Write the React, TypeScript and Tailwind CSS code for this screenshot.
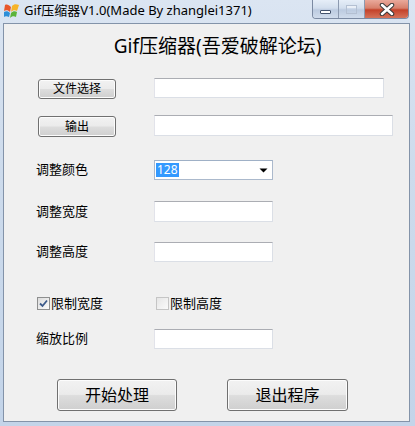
import React from "react";

function WinButton({ children, className }: { children: React.ReactNode; className: string }) {
  return (
    <div
      className={
        "flex items-center justify-center rounded-[3px] border border-[#707070] bg-[linear-gradient(to_bottom,#f2f2f2_0%,#ebebeb_48%,#dddddd_52%,#cfcfcf_100%)] shadow-[inset_0_0_0_1px_#fcfcfc] text-black " +
        className
      }
    >
      {children}
    </div>
  );
}

function TextBox({ className }: { className: string }) {
  return (
    <div
      className={
        "bg-white border border-[#dbdfe6] border-t-[#abadb3] border-l-[#e2e3ea] " + className
      }
    />
  );
}

function AppIcon() {
  return (
    <svg width="17" height="17" viewBox="0 0 17 17">
      <path d="M2 3 C4 2 6 3 8 5 L7 10 C5 8 3 8 1 9 Z" fill="#e8572a" />
      <path d="M9 4 C11 2 13 2 16 3 L14 9 C12 8 10 8 8 10 Z" fill="#f6b42a" />
      <path d="M1 10 C3 9 5 9 7 11 L6 15 C4 14 2 14 1 15 Z" fill="#2d8fd8" />
      <path d="M8 11 C10 9 12 9 14 10 L13 15 C11 14 9 14 7 16 Z" fill="#5bb43a" />
    </svg>
  );
}

function CheckBox({ checked }: { checked: boolean }) {
  return (
    <div
      className={
        "w-[13px] h-[13px] border flex items-center justify-center " +
        (checked
          ? "border-[#8e8f8f] bg-[linear-gradient(135deg,#dcdcdc,#fbfbfb)]"
          : "border-[#c5c5c5] bg-[linear-gradient(135deg,#e6e6e6,#fafafa)]")
      }
    >
      {checked && (
        <svg width="9" height="9" viewBox="0 0 9 9">
          <path d="M1 4.5 L3.5 7 L8 1.5" stroke="#3c5a8a" strokeWidth="1.8" fill="none" />
        </svg>
      )}
    </div>
  );
}

export default function App() {
  return (
    <div className="w-[415px] h-[426px] flex flex-col overflow-hidden bg-[linear-gradient(to_bottom,#dbe5f2_0%,#cddbec_40%,#c3d4e9_100%)] font-['Noto_Sans','Noto_Sans_CJK_SC',sans-serif] text-black">
      {/* title bar */}
      <div className="h-[23px] flex items-start relative shrink-0">
        <div className="ml-[3px] mt-[2px]">
          <AppIcon />
        </div>
        <div className="ml-[4px] mt-[2px] text-[13px] leading-[17px] text-black">
          Gif压缩器V1.0(Made By zhanglei1371)
        </div>
        <div className="absolute right-[6px] top-0 flex h-[19px] rounded-b-[4px] border border-t-0 border-[#7b8aa2] overflow-hidden">
          <div className="w-[26px] h-full flex items-center justify-center bg-[linear-gradient(to_bottom,#e6eef8_0%,#d2deed_45%,#bccbe0_55%,#d0dcec_100%)] border-r border-[#8c9ab0]">
            <div className="w-[11px] h-[4px] mt-[5px] bg-white border border-[#43536d] rounded-[1px]" />
          </div>
          <div className="w-[26px] h-full flex items-center justify-center bg-[linear-gradient(to_bottom,#e6eef8_0%,#d2deed_45%,#bccbe0_55%,#d0dcec_100%)] border-r border-[#8c9ab0]">
            <div className="w-[11px] h-[9px] border border-[#b4c0d2] shadow-[inset_0_2px_0_#ffffff80]" />
          </div>
          <div className="w-[43px] h-full flex items-center justify-center bg-[linear-gradient(to_bottom,#e9a99b_0%,#d7806c_45%,#c4422a_55%,#d5735a_100%)]">
            <svg width="16" height="13" viewBox="0 0 16 13">
              <path d="M3 2 L13 11 M13 2 L3 11" stroke="#3a3a3a" strokeWidth="4.5" strokeLinecap="round" />
              <path d="M3 2 L13 11 M13 2 L3 11" stroke="#ffffff" strokeWidth="2.5" strokeLinecap="round" />
            </svg>
          </div>
        </div>
      </div>

      {/* client area */}
      <div className="flex-1 ml-[3px] mr-[5px] mb-[4px] border border-[#8393a9] bg-[#f0f0f0] flex flex-col">
        <div className="mt-[10px] h-[24px] flex items-center justify-center text-[19px] leading-[24px] pl-[22px]">
          Gif压缩器(吾爱破解论坛)
        </div>

        <div className="mt-[20px] h-[21px] flex items-start pl-[34px]">
          <WinButton className="mt-[1px] w-[78px] h-[20px] text-[12px]">文件选择</WinButton>
          <TextBox className="ml-[38px] w-[230px] h-[20px]" />
        </div>

        <div className="mt-[16px] h-[22px] flex items-start pl-[34px]">
          <WinButton className="mt-[1px] w-[78px] h-[21px] text-[12px]">输出</WinButton>
          <TextBox className="ml-[38px] w-[239px] h-[21px]" />
        </div>

        <div className="mt-[23px] h-[20px] flex items-center pl-[32px]">
          <div className="w-[118px] text-[13px]">调整颜色</div>
          <div className="w-[119px] h-[20px] bg-white border border-[#abb9cc] border-t-[#9fb0c6] flex items-center pl-[1px] pr-[4px]">
            <span className="bg-[#3399ff] text-white text-[12px] leading-[14px] px-[1px]">128</span>
            <div className="flex-1" />
            <svg width="9" height="5" viewBox="0 0 9 5">
              <path d="M0.5 0.5 L8.5 0.5 L4.5 4.5 Z" fill="#000" />
            </svg>
          </div>
        </div>

        <div className="mt-[21px] h-[21px] flex items-center pl-[32px]">
          <div className="w-[118px] text-[13px]">调整宽度</div>
          <TextBox className="w-[119px] h-[21px]" />
        </div>

        <div className="mt-[20px] h-[20px] flex items-center pl-[32px]">
          <div className="w-[118px] text-[13px]">调整高度</div>
          <TextBox className="w-[119px] h-[20px]" />
        </div>

        <div className="mt-[34px] h-[14px] flex items-center pl-[33px]">
          <div className="w-[119px] flex items-center gap-[1px]">
            <CheckBox checked />
            <span className="text-[13px] leading-[14px]">限制宽度</span>
          </div>
          <div className="flex items-center gap-[1px]">
            <CheckBox checked={false} />
            <span className="text-[13px] leading-[14px]">限制高度</span>
          </div>
        </div>

        <div className="mt-[19px] h-[20px] flex items-center pl-[32px]">
          <div className="w-[118px] text-[13px]">缩放比例</div>
          <TextBox className="w-[119px] h-[20px]" />
        </div>

        <div className="mt-[30px] h-[32px] flex items-center pl-[53px]">
          <WinButton className="w-[120px] h-[32px] text-[16px]">开始处理</WinButton>
          <WinButton className="ml-[50px] w-[121px] h-[32px] text-[16px]">退出程序</WinButton>
        </div>
      </div>
    </div>
  );
}
